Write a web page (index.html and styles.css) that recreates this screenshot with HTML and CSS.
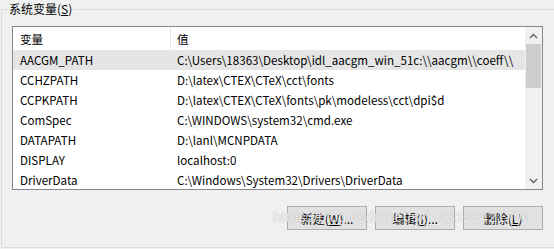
FILE: index.html
```html
<!DOCTYPE html>
<html lang="zh-CN">
<head>
    <meta charset="UTF-8">
    <title>系统变量</title>
    <link rel="stylesheet" href="styles.css">
</head>
<body>
    <div class="group">
        <div class="legend">系统变量(<u>S</u>)</div>
        <div class="listbox">
            <div class="table">
                <div class="head">
                    <div class="c1">变量</div>
                    <div class="c2">值</div>
                </div>
                <div class="row sel"><div class="c1">AACGM_PATH</div><div class="c2">C:\Users\18363\Desktop\idl_aacgm_win_51c:\\aacgm\\coeff\\</div></div>
                <div class="row"><div class="c1">CCHZPATH</div><div class="c2">D:\latex\CTEX\CTeX\cct\fonts</div></div>
                <div class="row"><div class="c1">CCPKPATH</div><div class="c2">D:\latex\CTEX\CTeX\fonts\pk\modeless\cct\dpi$d</div></div>
                <div class="row"><div class="c1">ComSpec</div><div class="c2">C:\WINDOWS\system32\cmd.exe</div></div>
                <div class="row"><div class="c1">DATAPATH</div><div class="c2">D:\lanl\MCNPDATA</div></div>
                <div class="row"><div class="c1">DISPLAY</div><div class="c2">localhost:0</div></div>
                <div class="row"><div class="c1">DriverData</div><div class="c2">C:\Windows\System32\Drivers\DriverData</div></div>
            </div>
            <div class="scroll">
                <div class="arrow">
                    <svg width="9" height="6" viewBox="0 0 9 6"><path d="M1 5 L4.5 1.5 L8 5" fill="none" stroke="#606060" stroke-width="1.4"/></svg>
                </div>
                <div class="thumb"></div>
                <div class="track"></div>
                <div class="arrow">
                    <svg width="9" height="6" viewBox="0 0 9 6"><path d="M1 1 L4.5 4.5 L8 1" fill="none" stroke="#606060" stroke-width="1.4"/></svg>
                </div>
            </div>
        </div>
        <div class="buttons">
            <button>新建(<u>W</u>)...</button>
            <button>编辑(<u>I</u>)...</button>
            <button>删除(<u>L</u>)</button>
        </div>
        <div class="mark">https://blog.csdn.net/sxj_13121421706</div>
    </div>
</body>
</html>
```
FILE: styles.css
```css
* {
    margin: 0;
    padding: 0;
    box-sizing: border-box;
}

body {
    background-color: #f0f0f0;
    font-family: "Noto Sans CJK SC", "Noto Sans", sans-serif;
    font-size: 12px;
    color: #000;
    overflow: hidden;
}

.group {
    position: relative;
    margin: 9px 0 0 1px;
    height: 239px;
    border: 1px solid #dcdcdc;
    border-right: 0;
    padding: 16px 0 0 10px;
}

.legend {
    position: absolute;
    top: -9px;
    left: 6px;
    padding: 0 1px;
    background-color: #f0f0f0;
    line-height: 16px;
}

.listbox {
    display: flex;
    width: 531px;
    height: 164px;
    border: 1px solid #828790;
    background-color: #fff;
    overflow: hidden;
    font-size: 11.6px;
}

.table {
    flex: 1;
    overflow: hidden;
}

.head {
    display: flex;
    height: 23px;
    align-items: center;
}

.head .c1 {
    border-right: 1px solid #e5e5e5;
    height: 100%;
    display: flex;
    align-items: center;
}

.row {
    display: flex;
    height: 20px;
    align-items: center;
}

.sel {
    background-color: #e5e5e5;
}

.c1 {
    width: 158px;
    flex-shrink: 0;
    padding-left: 7px;
}

.c2 {
    padding-left: 6px;
    white-space: nowrap;
}

.scroll {
    width: 17px;
    flex-shrink: 0;
    display: flex;
    flex-direction: column;
    background-color: #f0f0f0;
}

.arrow {
    height: 17px;
    display: flex;
    align-items: center;
    justify-content: center;
}

.thumb {
    height: 44px;
    margin: 0 1px;
    background-color: #cdcdcd;
}

.track {
    flex: 1;
}

.buttons {
    display: flex;
    justify-content: flex-end;
    gap: 8px;
    width: 531px;
    margin-top: 16px;
}

button {
    width: 80px;
    height: 24px;
    background-color: #e1e1e1;
    border: 1px solid #adadad;
    font-family: inherit;
    font-size: 12px;
    color: #000;
}

.mark {
    position: absolute;
    left: 271px;
    top: 198px;
    font-family: "Liberation Sans", Arial, sans-serif;
    font-size: 15px;
    color: rgba(255, 255, 255, 0.85);
    text-shadow: 0 0 1px rgba(0, 0, 0, 0.35);
    white-space: nowrap;
}
```
